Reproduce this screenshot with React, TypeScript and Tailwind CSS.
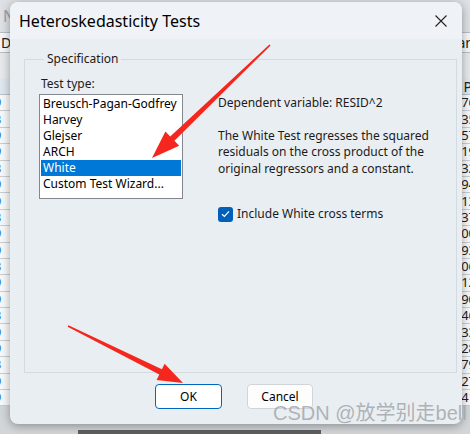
import React from 'react';

const tests = ['Breusch-Pagan-Godfrey', 'Harvey', 'Glejser', 'ARCH', 'White', 'Custom Test Wizard...'];
const rightDigits = ['76', '35', '57', '19', '32', '94', '13', '37', '00', '93', '06', '12', '90', '46', '33', '28', '79', '27', '41'];

function Arrows() {
  return (
    <svg className="absolute left-0 top-0 pointer-events-none" width="470" height="434" viewBox="0 0 470 434">
      <polygon
        fill="#f5261d"
        points="269.4,44.4 170.2,136.4 165.4,131.4 152,158 179.2,145.8 174.4,140.8 270.6,45.6"
      />
      <polygon
        fill="#f5261d"
        points="67.6,326.7 159.3,374.6 156.6,380 183,383 164.6,363.8 161.9,369.2 68.4,325.3"
      />
    </svg>
  );
}

function Spreadsheet() {
  return (
    <div className="flex flex-col w-full h-full bg-[#d6d9dc] text-[14px]" style={{ fontFamily: '"Noto Sans", sans-serif' }}>
      <div className="h-[32px] flex items-center bg-[#dde0e4] text-[#9aa0a6]">
        <span className="ml-[3px] text-[16px]">N</span>
      </div>
      <div className="h-[21px] flex items-center justify-between bg-[#f4f6f8] border-y border-[#b8bec4] text-[#222]">
        <span className="ml-[1px]">D</span>
        <span className="mr-[-4px]">an</span>
      </div>
      <div className="h-[25px] bg-[#e6e9ec]" />
      <div className="h-[17px] flex items-center justify-between bg-[#dfe6ee] border-b border-[#b8c2cc] text-[#222]">
        <span />
        <span className="mr-[-2px]">P</span>
      </div>
      {rightDigits.map((d, i) => (
        <div key={i} className="h-[16.4px] flex items-center justify-between bg-[#f7f8f9] border-b border-[#c9ced3] text-[13px] leading-none">
          <span className="ml-[-6px] text-[#3a7bd5]">{i % 3 === 1 ? '3' : '9'}</span>
          <span className="mr-[-6px] text-[#222]">{d}</span>
        </div>
      ))}
      <div className="flex-1 bg-[#d3d6d9]" />
    </div>
  );
}

function Dialog() {
  return (
    <div
      className="absolute left-[10px] top-[2px] w-[452px] h-[422px] rounded-[8px] overflow-hidden bg-[#e9eef2] flex flex-col shadow-[0_2px_10px_rgba(0,0,0,0.35)] text-[12px] text-[#1b1b1b]"
      style={{ fontFamily: '"Noto Sans", "Open Sans", sans-serif' }}
    >
      <div className="h-[37px] shrink-0 bg-[#eff3f7] flex items-center justify-between pl-[9px] pr-[15px]">
        <span className="text-[16px] text-black">Heteroskedasticity Tests</span>
        <svg width="12" height="12" viewBox="0 0 12 12">
          <path d="M0.5 0.5 L11.5 11.5 M11.5 0.5 L0.5 11.5" stroke="#222" strokeWidth="1.1" />
        </svg>
      </div>

      <fieldset className="mx-[14px] mt-[12px] h-[322px] border border-[#d3dae0] pl-[14px] pr-[10px] flex">
        <legend className="ml-[5px] px-[3px] leading-[16px]">Specification</legend>
        <div className="flex gap-[35px] pt-[9px]">
          <div className="flex flex-col">
            <span className="ml-[2px] leading-[16px]">Test type:</span>
            <div className="mt-[2px] w-[144px] h-[105px] bg-white border border-[#828790] p-[1px]">
              {tests.map((t) => (
                <div
                  key={t}
                  className={`h-[16px] leading-[16px] pl-[2px] whitespace-nowrap ${
                    t === 'White' ? 'bg-[#0078d7] text-white' : 'text-black'
                  }`}
                >
                  {t}
                </div>
              ))}
            </div>
          </div>
          <div className="flex flex-col pt-[19px] w-[228px]">
            <span className="leading-[16px]">Dependent variable: RESID^2</span>
            <p className="mt-[17px] leading-[16.4px]">
              The White Test regresses the squared residuals on the cross product of the original regressors and a constant.
            </p>
            <label className="mt-[28px] flex items-center gap-[4px]">
              <span className="w-[15px] h-[15px] rounded-[3px] bg-[#005fb8] flex items-center justify-center">
                <svg width="9" height="8" viewBox="0 0 9 8">
                  <path d="M1 4.2 L3.4 6.4 L8 1.4" fill="none" stroke="white" strokeWidth="1.2" />
                </svg>
              </span>
              <span>Include White cross terms</span>
            </label>
          </div>
        </div>
      </fieldset>

      <div className="flex gap-[25px] mt-[11px] ml-[145px]">
        <button className="w-[67px] h-[25px] rounded-[4px] bg-white border border-[#0067c0] text-black">OK</button>
        <button className="w-[66px] h-[25px] rounded-[4px] bg-[#fdfdfd] border border-[#d1d5d9] text-black">Cancel</button>
      </div>
    </div>
  );
}

export default function App() {
  return (
    <div className="relative w-[470px] h-[434px] overflow-hidden">
      <Spreadsheet />
      <div className="absolute left-[78px] top-[430px] w-[243px] h-[4px] bg-[#5c5f62]" />
      <Dialog />
      <Arrows />
      <span
        className="absolute left-[273px] top-[401px] text-[20px] leading-[24px] text-[#a3a7ac]/85 whitespace-nowrap"
        style={{ fontFamily: '"Liberation Sans", "Noto Sans CJK SC", sans-serif' }}
      >
        CSDN @放学别走bell
      </span>
    </div>
  );
}
